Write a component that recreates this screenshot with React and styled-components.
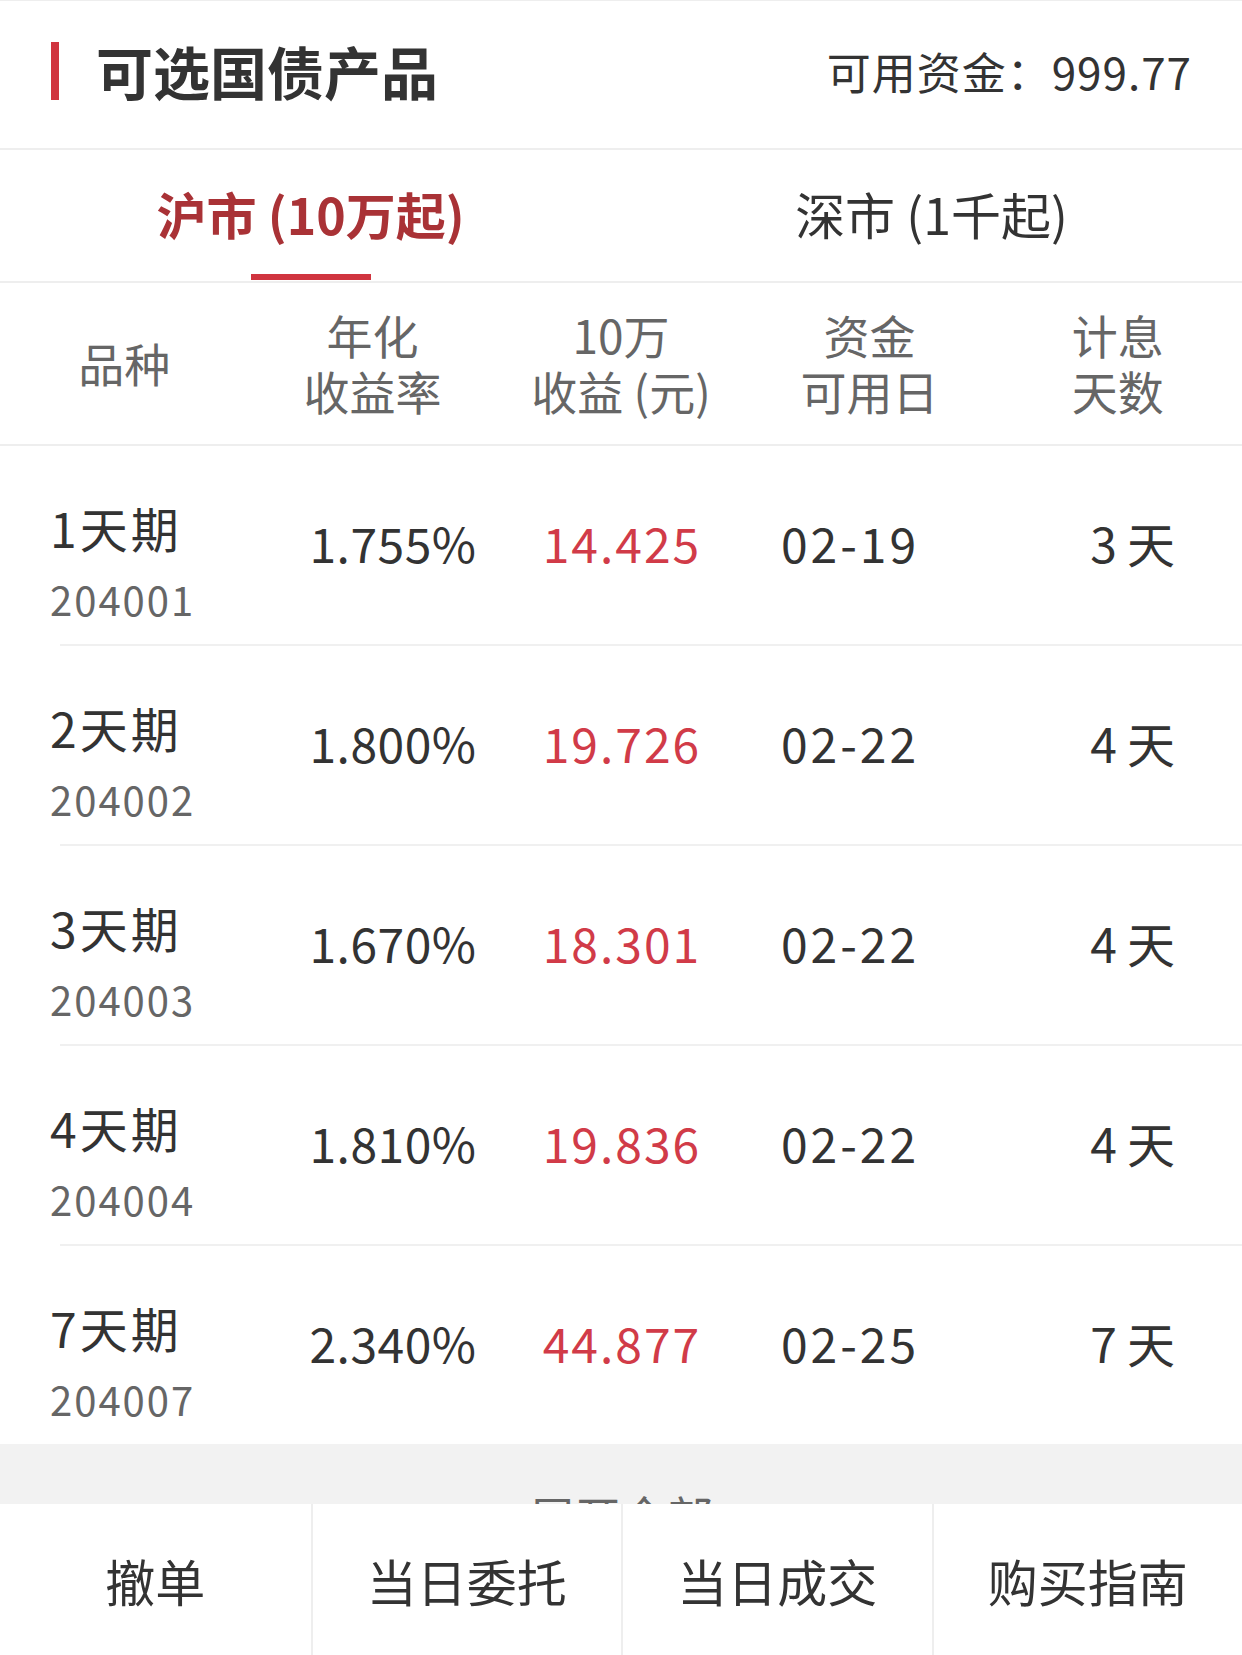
import React from "react";
import styled, { createGlobalStyle } from "styled-components";

const GlobalStyle = createGlobalStyle`
  body {
    margin: 0;
    background: #ffffff;
    font-family: "Noto Sans CJK SC", "Noto Sans", sans-serif;
    color: #333333;
  }
  * { box-sizing: border-box; }
`;

const Page = styled.div`
  width: 1242px;
  min-height: 1655px;
  background: #ffffff;
`;

const Header = styled.header`
  display: flex;
  align-items: center;
  height: 150px;
  padding: 0 50px 8px 51px;
  border-top: 1px solid #eeeeee;
  border-bottom: 2px solid #eeeeee;
`;

const Bar = styled.span`
  width: 8px;
  height: 58px;
  background: #d0343f;
  margin-right: 37px;
`;

const Title = styled.h1`
  margin: 0;
  font-size: 57px;
  font-weight: 700;
  line-height: 1;
  color: #333333;
`;

const Funds = styled.div`
  margin-left: auto;
  font-size: 44px;
  line-height: 1;
  letter-spacing: 1px;
  color: #333333;
`;

const Tabs = styled.nav`
  display: grid;
  grid-template-columns: 1fr 1fr;
  height: 133px;
  border-bottom: 2px solid #eeeeee;
`;

const Tab = styled.div`
  display: flex;
  flex-direction: column;
  align-items: center;
`;

const TabLabel = styled.div`
  flex: 1;
  display: flex;
  align-items: center;
  padding-top: 2px;
  font-size: 50px;
  font-weight: ${(p) => (p.$active ? 700 : 400)};
  color: ${(p) => (p.$active ? "#a93236" : "#333333")};
`;

const Indicator = styled.span`
  width: 120px;
  height: 6px;
  margin-bottom: 1px;
  background: ${(p) => (p.$active ? "#d0343f" : "transparent")};
`;

const HeadRow = styled.div`
  display: grid;
  grid-template-columns: repeat(5, 1fr);
  align-items: center;
  height: 163px;
  padding-bottom: 4px;
  border-bottom: 2px solid #eeeeee;
`;

const HeadCell = styled.div`
  text-align: center;
  font-size: 46px;
  line-height: 56px;
  color: #666666;
`;

const Row = styled.div`
  display: grid;
  grid-template-columns: 284px 218px 240px 216px 1fr;
  align-items: center;
  height: 198px;
`;

const NameCell = styled.div`
  align-self: start;
  padding: 51px 0 0 50px;
`;

const Name = styled.div`
  font-size: 48px;
  line-height: 60px;
  letter-spacing: 3px;
  color: #333333;
`;

const Code = styled.div`
  margin-top: 17px;
  font-size: 40px;
  line-height: 50px;
  letter-spacing: 2px;
  color: #666666;
`;

const Value = styled.div`
  text-align: ${(p) => (p.$right ? "right" : "center")};
  padding-right: ${(p) => (p.$right ? "57px" : "0")};
  padding-bottom: 7px;
  font-size: 48px;
  line-height: 60px;
  letter-spacing: ${(p) => p.$spacing || 0}px;
  color: ${(p) => (p.$red ? "#d13b48" : "#333333")};
`;

const Divider = styled.div`
  height: 2px;
  margin-left: 60px;
  background: #f0f0f0;
`;

const MoreBand = styled.div`
  display: flex;
  justify-content: center;
  align-items: flex-start;
  gap: 18px;
  padding: 41px 0 160px 68px;
  background: #f2f2f2;
  font-size: 46px;
  line-height: 60px;
  color: #666666;
`;

const Chevron = styled.svg`
  width: 50px;
  height: 30px;
  margin-top: 16px;
`;

const BottomBar = styled.footer`
  position: fixed;
  left: 0;
  right: 0;
  bottom: 0;
  display: grid;
  grid-template-columns: repeat(4, 1fr);
  height: 151px;
  background: #ffffff;
`;

const BarItem = styled.div`
  display: flex;
  align-items: center;
  justify-content: center;
  font-size: 50px;
  color: #333333;
  border-left: ${(p) => (p.$first ? "none" : "2px solid #eeeeee")};
`;

const rows = [
  { name: "1天期", code: "204001", rate: "1.755%", gain: "14.425", date: "02-19", days: "3天" },
  { name: "2天期", code: "204002", rate: "1.800%", gain: "19.726", date: "02-22", days: "4天" },
  { name: "3天期", code: "204003", rate: "1.670%", gain: "18.301", date: "02-22", days: "4天" },
  { name: "4天期", code: "204004", rate: "1.810%", gain: "19.836", date: "02-22", days: "4天" },
  { name: "7天期", code: "204007", rate: "2.340%", gain: "44.877", date: "02-25", days: "7天" },
];

const actions = ["撤单", "当日委托", "当日成交", "购买指南"];

export default function App() {
  return (
    <Page>
      <GlobalStyle />
      <Header>
        <Bar />
        <Title>可选国债产品</Title>
        <Funds>可用资金：999.77</Funds>
      </Header>

      <Tabs>
        <Tab>
          <TabLabel $active>沪市 (10万起)</TabLabel>
          <Indicator $active />
        </Tab>
        <Tab>
          <TabLabel>深市 (1千起)</TabLabel>
          <Indicator />
        </Tab>
      </Tabs>

      <HeadRow>
        <HeadCell>品种</HeadCell>
        <HeadCell>年化<br />收益率</HeadCell>
        <HeadCell>10万<br />收益 (元)</HeadCell>
        <HeadCell>资金<br />可用日</HeadCell>
        <HeadCell>计息<br />天数</HeadCell>
      </HeadRow>

      {rows.map((r, i) => (
        <React.Fragment key={r.code}>
          {i > 0 && <Divider />}
          <Row>
            <NameCell>
              <Name>{r.name}</Name>
              <Code>{r.code}</Code>
            </NameCell>
            <Value $spacing={0.5}>{r.rate}</Value>
            <Value $red $spacing={2}>{r.gain}</Value>
            <Value $spacing={3}>{r.date}</Value>
            <Value $right $spacing={10}>{r.days}</Value>
          </Row>
        </React.Fragment>
      ))}

      <MoreBand>
        <span>展开全部</span>
        <Chevron viewBox="0 0 50 30">
          <path d="M4 4 L25 24 L46 4" fill="none" stroke="#888888" strokeWidth="3" />
        </Chevron>
      </MoreBand>

      <BottomBar>
        {actions.map((a, i) => (
          <BarItem key={a} $first={i === 0}>{a}</BarItem>
        ))}
      </BottomBar>
    </Page>
  );
}
